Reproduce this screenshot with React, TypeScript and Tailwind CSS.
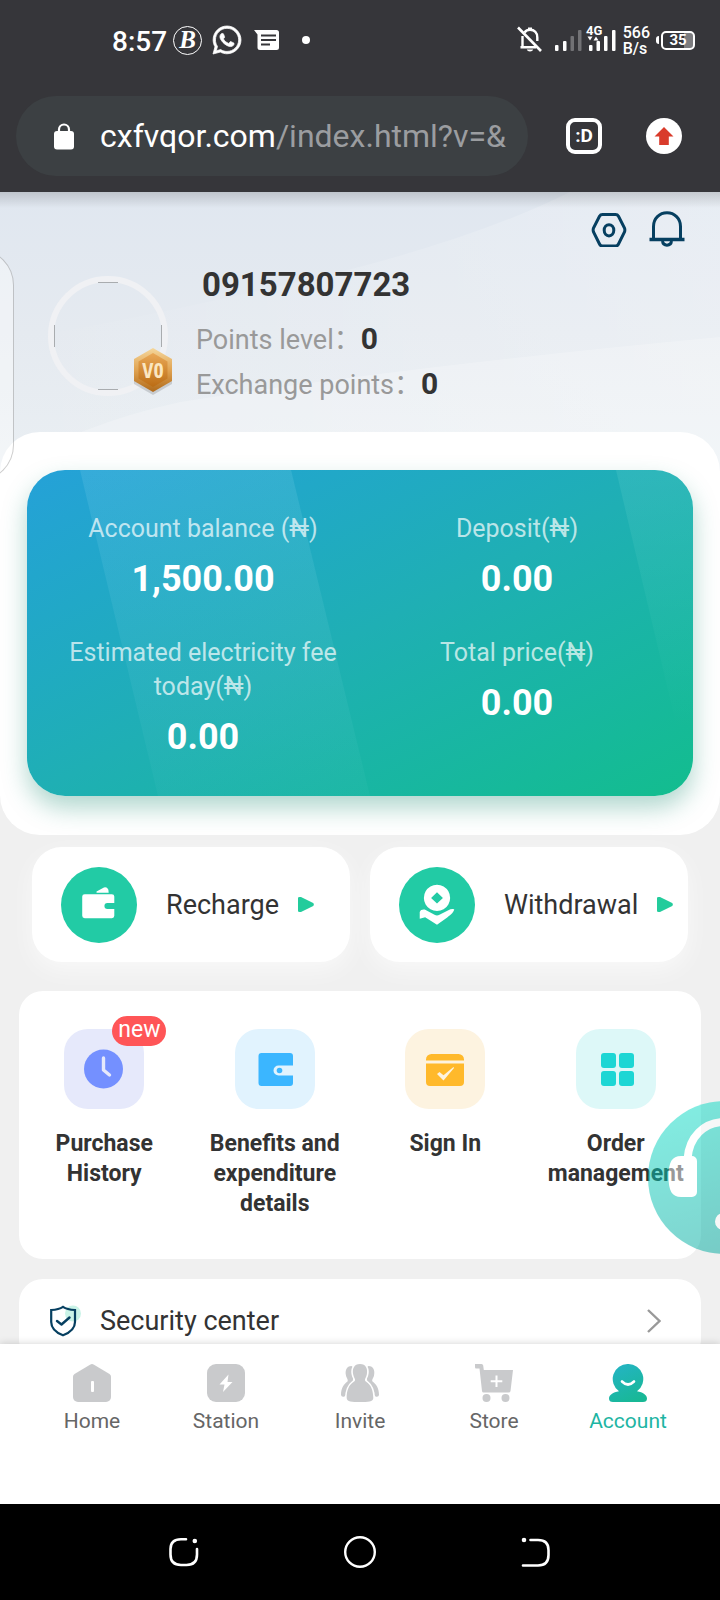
import type { ReactNode } from 'react';
import { FaWhatsapp } from 'react-icons/fa';

function StatusBar() {
  return (
    <div className="flex h-20 items-center justify-between pr-[25px] pl-28 text-white">
      <div className="flex items-center">
        <span className="pt-1 text-[28px] leading-8 font-medium">8:57</span>
        <span className="ml-1.5 flex size-[29px] items-center justify-center rounded-full border border-white font-['Liberation_Serif',serif] text-[25px] leading-6 font-bold italic">
          B
        </span>
        <FaWhatsapp className="ml-[9px] size-8 stroke-white stroke-[12px]" />
        <svg className="ml-[11px] h-5 w-[26px]" viewBox="0 0 26 20">
          <path d="M0 0H22.500a2.500 2.500 0 0 1 2.500 2.500V17.500a2.500 2.500 0 0 1-2.500 2.500H6a2.500 2.500 0 0 1-2.500-2.500V4.500Z" fill="#fff" />
          <path d="M7 5.500H22M7 10H22M7 14.500H16" stroke="#36363a" strokeWidth="2" />
        </svg>
        <span className="ml-[22px] size-2 rounded-full bg-white" />
      </div>
      <div className="flex items-center">
        <svg className="h-7 w-[26px]" viewBox="0 0 26 28" fill="none" stroke="#fff">
          <path d="M5.500 10V20.500M3.500 21.200H19M7.500 6.500C9 4.500 11 3.800 13 3.800c4.500 0 7.300 3 7.300 7.700V15" strokeWidth="2.400" />
          <path d="M13 4V1.500" strokeWidth="4" />
          <path d="M9.800 23.500h6.400c-.6 2.600-5.800 2.600-6.400 0Z" fill="#fff" stroke="none" />
          <path d="M1 1.500 24 25" strokeWidth="2.600" />
        </svg>
        <svg className="ml-3 h-10 w-[62px]" viewBox="0 -5 62 40">
          <g fill="#fff">
            <rect x="0" y="20" width="3.500" height="6" rx="1" />
            <rect x="8" y="16" width="3.500" height="10" rx="1" />
            <rect x="15.500" y="11" width="3.500" height="15" rx="1" opacity="0.300" />
            <rect x="23" y="5" width="3.500" height="21" rx="1" opacity="0.300" />
            <rect x="34" y="20" width="3.500" height="6" rx="1" />
            <rect x="41.500" y="16" width="3.500" height="10" rx="1" />
            <rect x="49" y="11" width="3.500" height="15" rx="1" />
            <rect x="57" y="5" width="3.500" height="21" rx="1" />
            <path d="M32.500 11.500h5L35 15.500ZM38.500 15.500h5L41 11.500Z" />
            <text x="31" y="10" fontSize="13" fontWeight="700">4G</text>
          </g>
        </svg>
        <span className="ml-1.5 pt-0.5 text-[16px] leading-4 font-medium">
          566
          <br />
          B/s
        </span>
        <span className="ml-1.5 h-2 w-[3px] rounded-l-sm bg-white" />
        <span className="ml-0.5 flex h-[19px] w-[34px] items-center justify-center rounded-[5px] border-2 border-white bg-linear-to-r from-transparent from-70% to-white/35 to-70% text-[15px] leading-4 font-bold">
          35
        </span>
      </div>
    </div>
  );
}

function BrowserBar() {
  return (
    <div className="flex items-center px-4 pt-4 pb-4">
      <button className="flex h-20 min-w-0 flex-1 items-center overflow-hidden rounded-full bg-[#3c4043] pl-[38px] text-left text-[32px] leading-10 whitespace-nowrap text-[#9b9da0]">
        <svg className="mr-[26px] h-[27px] w-5 shrink-0" viewBox="0 0 20 27">
          <rect y="8" width="20" height="18.500" rx="3" fill="#fff" />
          <path d="M5 9V6.500a5 5 0 0 1 10 0V9" fill="none" stroke="#fff" strokeWidth="2.200" />
        </svg>
        <span className="text-white">cxfvqor.com</span>
        <span>/index.html?v=&amp;</span>
      </button>
      <button className="ml-[38px] flex size-9 items-center justify-center rounded-[9px] border-4 border-white text-[19px] leading-5 font-bold text-white">
        :D
      </button>
      <button aria-label="Update available" className="mr-[22px] ml-11 flex size-9 items-center justify-center rounded-full bg-white">
        <svg className="size-5" viewBox="0 0 20 20" fill="#d93b2b">
          <path d="M10 1 19.500 10.500H14.800V19H5.200V10.500H.500Z" />
        </svg>
      </button>
    </div>
  );
}

function VipBadge() {
  return (
    <svg className="absolute top-[71px] left-[83px] h-[50px] w-11" viewBox="0 0 44 50">
      <defs>
        <linearGradient id="rim" x1="0" y1="0" x2="0" y2="1">
          <stop offset="0" stopColor="#f5d79c" />
          <stop offset="0.500" stopColor="#e0a352" />
          <stop offset="1" stopColor="#b06a1a" />
        </linearGradient>
        <linearGradient id="core" x1="0" y1="0" x2="0" y2="1">
          <stop offset="0" stopColor="#eaa957" />
          <stop offset="1" stopColor="#bb6c14" />
        </linearGradient>
      </defs>
      <path d="M22 4 41 15V37L22 48 3 37V15Z" fill="#000" opacity="0.140" />
      <path d="M22 1 41 12V34L22 45 3 34V12Z" fill="url(#rim)" />
      <path d="M22 6 36.500 14.500V31.500L22 40 7.500 31.500V14.500Z" fill="url(#core)" />
      <text x="22" y="31" textAnchor="middle" fontSize="22" fontWeight="500" fill="#fbe6c0" fontFamily="'Open Sans Condensed', 'Roboto Condensed', Roboto, sans-serif">
        V0
      </text>
    </svg>
  );
}

function ProfileHeader() {
  return (
    <header className="relative bg-linear-to-b from-[#e0e7f0] via-[#e5eaf0] to-[#eaeff3] pb-16">
      <svg className="absolute inset-0 size-full" viewBox="0 0 720 280" preserveAspectRatio="none">
        <defs>
          <linearGradient id="ray" x1="0" y1="0" x2="1" y2="0">
            <stop offset="0" stopColor="#fff" stopOpacity="0" />
            <stop offset="1" stopColor="#fff" stopOpacity="0.250" />
          </linearGradient>
        </defs>
        <path d="M720 0H570Q450 60 230 105 120 130 0 150V290H720Z" fill="url(#ray)" />
        <path d="M720 145Q400 175 180 210 80 232 0 280H720Z" fill="#fff" opacity="0.220" />
      </svg>
      <div className="absolute inset-x-0 top-0 h-4 bg-linear-to-b from-black/15 to-transparent" />
      <div className="relative flex justify-end gap-[22px] pt-[19px] pr-[35px]">
        <button aria-label="Settings">
          <svg className="size-9" viewBox="0 0 36 36" fill="none" stroke="#063f60" strokeWidth="3">
            <path d="M11.500 3.500H24.500Q26.500 3.500 27.500 5.200L33.500 17Q34.200 19 33.500 21L27.500 33Q26.500 35 24.500 35H11.500Q9.500 35 8.500 33L2.500 21Q1.800 19 2.500 17L8.500 5.200Q9.500 3.500 11.500 3.500Z" />
            <ellipse cx="18" cy="19.300" rx="4.800" ry="5.600" />
          </svg>
        </button>
        <button aria-label="Notifications">
          <svg className="size-9" viewBox="0 0 36 36" fill="none" stroke="#063f60" strokeWidth="3">
            <path d="M4.500 28V15.500C4.500 7.500 10.500 1.800 18 1.800S31.500 7.500 31.500 15.500V28" />
            <path d="M.500 28.500H35.500" strokeWidth="3.600" />
            <path d="M13.500 30c.6 5.500 8.400 5.500 9 0" />
          </svg>
        </button>
      </div>
      <div className="relative flex pt-4 pl-12">
        <div className="relative mt-[13px] size-[120px] shrink-0 rounded-full border-[6px] border-[#f0f1f4]">
          <svg className="size-full" viewBox="0 0 108 108" stroke="#a9acaf" strokeWidth="1">
            <path d="M44 .500H64M44 107.500H64M.500 43V65M107.500 43V65" />
          </svg>
          <div className="absolute -inset-1.5">
            <VipBadge />
          </div>
        </div>
        <div className="ml-7">
          <h1 className="mb-[11px] pl-1.5 text-[33px] leading-11 font-bold text-[#333]">09157807723</h1>
          <p className="text-[27px] leading-[45px] text-[#999]">
            Points level：<b className="text-[30px] leading-none text-[#333]">0</b>
          </p>
          <p className="text-[27px] leading-[45px] text-[#999]">
            Exchange points：<b className="text-[30px] leading-none text-[#333]">0</b>
          </p>
        </div>
      </div>
    </header>
  );
}

function Balance({ label, value }: { label: string; value: string }) {
  return (
    <div>
      <dt className="px-5 text-[25px] leading-[34px] text-white/70">{label}</dt>
      <dd className="mt-2 text-[36px] leading-[50px] font-bold text-white">{value}</dd>
    </div>
  );
}

function BalanceCard() {
  return (
    <section className="relative -mt-10 rounded-[40px] bg-white px-[27px] pt-[38px] pb-[39px]">
      <div className="relative overflow-hidden rounded-[38px] bg-linear-to-br from-[#25a1d8] via-[#1fafb4] to-[#13bd8e] shadow-[0_12px_24px_rgba(30,140,115,0.35)]">
        <svg className="absolute inset-0 size-full" viewBox="0 0 666 326" preserveAspectRatio="none">
          <defs>
            <linearGradient id="shine" x1="0" y1="0" x2="0" y2="1">
              <stop offset="0" stopColor="#c8f4ff" stopOpacity="0.110" />
              <stop offset="1" stopColor="#c8f4ff" stopOpacity="0.030" />
            </linearGradient>
            <linearGradient id="shine-edge" x1="0" y1="0" x2="0" y2="1">
              <stop offset="0" stopColor="#b8ffe8" stopOpacity="0.100" />
              <stop offset="0.800" stopColor="#b8ffe8" stopOpacity="0" />
            </linearGradient>
          </defs>
          <path d="M53 0H264L343 326H131Z" fill="url(#shine)" />
          <path d="M589 0H666V326Z" fill="url(#shine-edge)" />
        </svg>
        <dl className="relative grid grid-cols-2 gap-y-8 px-[19px] pt-[42px] pb-[34px] text-center">
          <Balance label="Account balance (₦)" value="1,500.00" />
          <Balance label="Deposit(₦)" value="0.00" />
          <Balance label="Estimated electricity fee today(₦)" value="0.00" />
          <Balance label="Total price(₦)" value="0.00" />
        </dl>
      </div>
    </section>
  );
}

function ActionButton({ label, children }: { label: string; children: ReactNode }) {
  return (
    <button className="flex h-[115px] flex-1 items-center rounded-[30px] bg-white pl-[29px] text-[27px] leading-8 text-[#333] shadow-[0_8px_24px_rgba(255,255,255,0.6)]">
      <svg className="mr-[29px] size-[76px] shrink-0" viewBox="0 0 77 77">
        <circle cx="38.500" cy="38.500" r="38.500" fill="#22cba5" />
        {children}
      </svg>
      {label}
      <svg className="ml-[19px] h-[15px] w-4 shrink-0" viewBox="0 0 16 15" fill="#23cc9c">
        <path d="M0 1Q0 0 1.500 0H3L15.200 6Q16.500 7.500 15.200 9L3 15H1.500Q0 15 0 14Z" />
      </svg>
    </button>
  );
}

function Actions() {
  return (
    <section className="flex gap-5 px-8 pt-3">
      <ActionButton label="Recharge">
        <path fill="#fff" d="M24 27.500H51.500a2.500 2.500 0 0 1 2.500 2.500V36.500H47a3 3 0 0 0 0 6H54V49.500a2.500 2.500 0 0 1-2.500 2.500H24a2.500 2.500 0 0 1-2.500-2.500V30a2.500 2.500 0 0 1 2.500-2.500ZM36 26.200V24.800L43.500 20.800Q46.500 19.800 48 23L48.300 26.200Z" />
      </ActionButton>
      <ActionButton label="Withdrawal">
        <path fill="#fff" fillRule="evenodd" d="M38.500 18a13.300 13.300 0 1 0 .01 0ZM38.500 25.500 44.500 31.300 38.500 37 32.500 31.300Z" />
        <path fill="#fff" d="M21 45.500C22 43 25 42.500 27 43.500L36 48.500Q38.500 49.800 41 48.500L50 43.800Q53 42 56 42.800C55 47 51 49 48.500 51.500L38.500 58.500 26.500 51 21 52.500Z" />
      </ActionButton>
    </section>
  );
}

function MenuItem({ label, tile, badge, children }: { label: string; tile: string; badge?: string; children: ReactNode }) {
  return (
    <a href="#menu" className="flex flex-col items-center gap-5 px-2 text-center text-[23px] leading-[30px] font-bold text-[#333]">
      <span className={`relative size-20 rounded-3xl ${tile}`}>
        <svg className="size-full" viewBox="0 0 80 80">
          {children}
        </svg>
        {badge && (
          <span className="absolute -top-[13px] left-12 h-[30px] rounded-full bg-[#ff5557] px-1.5 text-[23px] leading-7 font-normal text-white">
            {badge}
          </span>
        )}
      </span>
      {label}
    </a>
  );
}

function Menu() {
  return (
    <section className="mx-[19px] mt-[29px] grid grid-cols-4 rounded-3xl bg-white pt-[38px] pb-10">
      <MenuItem label="Purchase History" tile="bg-[#e6e9fb]" badge="new">
        <circle cx="39.500" cy="40" r="19.500" fill="#7490ff" />
        <path d="M39.500 29V41L45.500 46" fill="none" stroke="#e6e9fb" strokeWidth="3.400" strokeLinecap="round" strokeLinejoin="round" />
      </MenuItem>
      <MenuItem label="Benefits and expenditure details" tile="bg-[#e1f3fe]">
        <path fill="#3bb6ff" d="M26.500 24H55a3 3 0 0 1 3 3V36.500H43.500a5 5 0 0 0 0 10H58V54a3 3 0 0 1-3 3H26.500a3 3 0 0 1-3-3V27a3 3 0 0 1 3-3Z" />
        <circle cx="44.500" cy="41.500" r="2.800" fill="#3bb6ff" />
      </MenuItem>
      <MenuItem label="Sign In" tile="bg-[#fdf3e0]">
        <path fill="#ffb92b" d="M26.500 25H53.500a5.500 5.500 0 0 1 5.500 5.500V31.500H21V30.500A5.500 5.500 0 0 1 26.500 25ZM21 34.500H59V53a4 4 0 0 1-4 4H25a4 4 0 0 1-4-4Z" />
        <path fill="#fdf3e0" d="M32 45 34.500 43 38.500 46.200 48.500 38 49 39 38.500 51.500Z" />
      </MenuItem>
      <MenuItem label="Order management" tile="bg-[#ddf8f8]">
        <g fill="#1dd6d4">
          <rect x="25" y="24" width="15" height="15" rx="3" />
          <rect x="43" y="24" width="15" height="15" rx="3" />
          <rect x="25" y="42" width="15" height="15" rx="3" />
          <rect x="43" y="42" width="15" height="15" rx="3" />
        </g>
      </MenuItem>
    </section>
  );
}

function SecurityRow() {
  return (
    <section className="mx-[19px] mt-5 rounded-3xl bg-white">
      <a href="#security" className="flex h-[84px] items-center pr-10 pl-[30px] text-[27px] leading-8 text-[#333]">
        <svg className="mr-[19px] size-8" viewBox="0 0 32 32">
          <circle cx="24" cy="8.500" r="8" fill="#c9f3e7" />
          <path d="M2.200 5Q10 4.500 14 1.800 18 4.500 26 5V17C26 24 20 28 14 30.300 8 28 2.200 24 2.200 17Z" fill="none" stroke="#063f60" strokeWidth="2.200" />
          <path d="M8 16 12.500 19.500 20.500 12.500" fill="none" stroke="#063f60" strokeWidth="2.400" strokeLinecap="round" strokeLinejoin="round" />
        </svg>
        Security center
        <svg className="ml-auto h-6 w-3.5" viewBox="0 0 14 24" fill="none" stroke="#999" strokeWidth="2.400">
          <path d="M1 1 12.500 12 1 23" />
        </svg>
      </a>
    </section>
  );
}

function SupportBubble() {
  return (
    <button aria-label="Customer service" className="absolute right-[-81px] bottom-[90px] opacity-50">
      <svg className="size-[153px]" viewBox="0 0 153 153">
        <defs>
          <linearGradient id="bubble" x1="0.300" y1="0" x2="0.600" y2="1">
            <stop offset="0" stopColor="#08dcc6" />
            <stop offset="1" stopColor="#00a79d" />
          </linearGradient>
        </defs>
        <circle cx="76.500" cy="76.500" r="76.500" fill="url(#bubble)" />
        <path d="M39.500 58C41 36 56 21 76.500 21S113 36 114.500 58" fill="none" stroke="#fff" strokeWidth="8" />
        <path d="M33 55H44a5 5 0 0 1 5 5V91a5 5 0 0 1-5 5H33C24 96 20.500 90 20.500 75.500S24 55 33 55ZM120 55H109a5 5 0 0 0-5 5V91a5 5 0 0 0 5 5H120C129 96 132.500 90 132.500 75.500S129 55 120 55Z" fill="#fff" />
        <rect x="67" y="112" width="24" height="17" rx="8.500" fill="#fff" />
      </svg>
    </button>
  );
}

function Tab({ label, active, children }: { label: string; active?: boolean; children: ReactNode }) {
  return (
    <a
      href="#tab"
      className={`flex flex-1 flex-col items-center gap-[7px] text-[21px] leading-6 ${active ? 'text-[#1db5a3]' : 'text-[#666]'}`}
    >
      <svg className="size-[38px]" viewBox="0 0 38 38" fill="#c9cacc">
        {children}
      </svg>
      {label}
    </a>
  );
}

function TabBar() {
  return (
    <nav className="relative flex h-40 shrink-0 bg-white px-[25px] pt-5 shadow-[0_0_8px_rgba(0,0,0,0.18)]">
      <Tab label="Home">
        <path d="M17 .700Q19-.500 21 .700L36.500 10Q38 11 38 12.500V33a5 5 0 0 1-5 5H5a5 5 0 0 1-5-5V12.500Q0 11 1.500 10Z" />
        <rect x="18" y="17" width="3" height="11" rx="1" fill="#fff" />
      </Tab>
      <Tab label="Station">
        <rect width="38" height="38" rx="9" />
        <path d="M21.500 10.500 12.500 20.500H17.500L16 28 25.500 18H20.500Z" fill="#fff" />
      </Tab>
      <Tab label="Invite">
        <path d="M10.500 2C5.500 2 3.800 7 5 11.500 5.500 14 7.500 15.500 6.500 17.500 3 20 0 24 0 31Q.500 33.500 3.500 32.500L12 22V3ZM27.500 2C32.500 2 34.200 7 33 11.500 32.500 14 30.500 15.500 31.500 17.500 35 20 38 24 38 31Q37.500 33.500 34.500 32.500L26 22V3Z" />
        <path
          d="M19 0C25 0 27 5 25.800 10.500 25.300 13.500 23.500 14.500 24 16.500 24.500 18.500 32.300 19.500 32.300 34 32.300 38 27 38 19 38S5.700 38 5.700 34C5.700 19.500 13.500 18.500 14 16.500 14.500 14.500 12.700 13.500 12.200 10.500 11 5 13 0 19 0Z"
          stroke="#fff"
          strokeWidth="3.200"
          paintOrder="stroke"
        />
      </Tab>
      <Tab label="Store">
        <path d="M0 0H6.500Q8 0 8.200 1.500L8.800 6H38L35.500 27Q35.300 28.500 33.500 28.500H8.500Q7.200 28.500 7 27L4.500 4.500H1Q0 4.500 0 3Z" />
        <circle cx="11.500" cy="34" r="4" />
        <circle cx="30.500" cy="34" r="4" />
        <path d="M21.500 11.500V23M15.700 17.300H27.300" stroke="#fff" strokeWidth="2" />
      </Tab>
      <Tab label="Account" active>
        <defs>
          <linearGradient id="person" x1="0.200" y1="0" x2="0.700" y2="1">
            <stop offset="0" stopColor="#24b4c4" />
            <stop offset="1" stopColor="#18b895" />
          </linearGradient>
        </defs>
        <path fill="url(#person)" d="M19 0A15 15 0 0 1 28 27.200C34 28.300 38 31 38 34.500Q38 38 34 38H4Q0 38 0 34.500C0 31 4 28.300 10 27.200A15 15 0 0 1 19 0Z" />
        <path d="M13 17.500Q19 23.500 25 17.500" fill="none" stroke="#fff" strokeWidth="2.600" strokeLinecap="round" />
      </Tab>
    </nav>
  );
}

function SystemBar() {
  return (
    <div className="relative flex h-24 shrink-0 items-center justify-center gap-36 bg-black">
      <button aria-label="Recent apps">
        <svg className="size-8" viewBox="0 0 32 32" fill="none" stroke="#fff" strokeWidth="2.600" strokeLinecap="round">
          <path d="M18 3.200H13Q2.500 3.200 2.500 13V18.500Q2.500 29 13 29H18.500Q29 29 29 18.500V13" />
          <circle cx="26.800" cy="5" r="1" fill="#fff" />
        </svg>
      </button>
      <button aria-label="Home screen">
        <svg className="size-8" viewBox="0 0 32 32" fill="none" stroke="#fff" strokeWidth="2.400">
          <circle cx="16" cy="16" r="14.800" />
        </svg>
      </button>
      <button aria-label="Back">
        <svg className="size-8" viewBox="0 0 32 32" fill="none" stroke="#fff" strokeWidth="2.600" strokeLinecap="round">
          <path d="M10.500 4H18Q28.500 4 28.500 14V19Q28.500 29.500 18 29.500H3" />
          <circle cx="4" cy="4" r="1" fill="#fff" />
        </svg>
      </button>
    </div>
  );
}

export default function App() {
  return (
    <div className="flex h-screen flex-col overflow-hidden bg-[#f0f0f0] font-[Roboto,'Noto_Sans_CJK_SC',sans-serif]">
      <div className="shrink-0 bg-[#36363a]">
        <StatusBar />
        <BrowserBar />
      </div>
      <div className="relative flex min-h-0 flex-1 flex-col overflow-hidden">
        <main className="min-h-0 flex-1 overflow-x-hidden overflow-y-auto [scrollbar-width:none]">
          <ProfileHeader />
          <BalanceCard />
          <Actions />
          <Menu />
          <SecurityRow />
        </main>
        <div className="absolute top-[57px] left-[-60px] h-[232px] w-[74px] rounded-[36px] border border-black/20 bg-white/40" />
        <SupportBubble />
      </div>
      <TabBar />
      <SystemBar />
    </div>
  );
}
